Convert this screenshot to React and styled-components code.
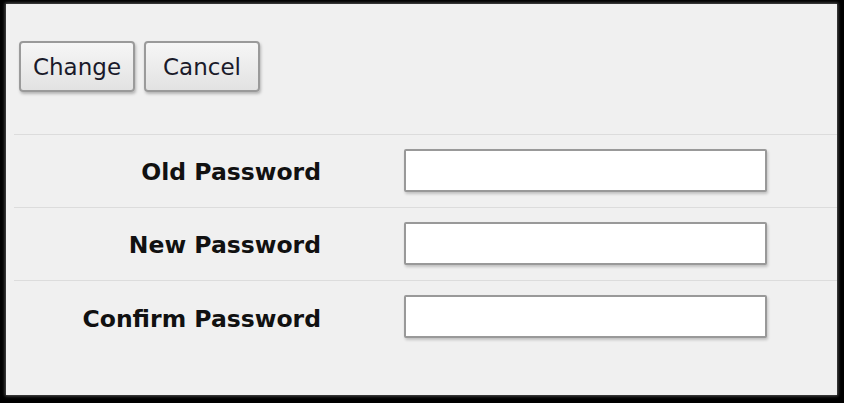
import React from "react";
import styled, { createGlobalStyle } from "styled-components";

const GlobalStyle = createGlobalStyle`
  html, body {
    margin: 0;
    padding: 0;
    background: #000;
  }
  body {
    font-family: "DejaVu Sans", Verdana, sans-serif;
  }
`;

const Frame = styled.div`
  width: 844px;
  height: 403px;
  box-sizing: border-box;
  padding: 4px 7px 8px 6px;
  background: #000;
`;

const Panel = styled.div`
  height: 100%;
  box-sizing: border-box;
  background: #f0f0f0;
  padding-left: 8px;
  box-shadow: 0 0 3px 1px #555;
`;

const Toolbar = styled.div`
  display: flex;
  gap: 9px;
  padding: 37px 0 0 5px;
  height: 131px;
  box-sizing: border-box;
  border-bottom: 1px solid #dcdcdc;
`;

const Button = styled.button`
  height: 51px;
  width: ${(p) => p.width}px;
  font-family: "DejaVu Sans", Verdana, sans-serif;
  font-size: 23px;
  color: #1a1a2a;
  background: linear-gradient(#f6f6f6, #e2e2e2);
  border: 2px solid #9a9a9a;
  border-radius: 4px;
  box-shadow: 1px 2px 3px rgba(0, 0, 0, 0.25);
  padding: 0;
`;

const Row = styled.div`
  display: grid;
  grid-template-columns: 307px 1fr;
  align-items: center;
  height: 73px;
  box-sizing: border-box;
  border-bottom: ${(p) => (p.last ? "none" : "1px solid #dcdcdc")};
`;

const Label = styled.label`
  text-align: right;
  font-weight: bold;
  font-size: 23.5px;
  color: #111;
  padding-top: 2px;
`;

const Input = styled.input`
  margin: 0 0 2px 83px;
  width: 363px;
  height: 43px;
  box-sizing: border-box;
  background: #fff;
  border: 2px solid #999;
  border-radius: 2px;
  box-shadow: 1px 2px 3px rgba(0, 0, 0, 0.2);
  outline: none;
`;

const fields = ["Old Password", "New Password", "Confirm Password"];

const App = () => {
  return (
    <Frame>
      <GlobalStyle />
      <Panel>
        <Toolbar>
          <Button width={116}>Change</Button>
          <Button width={116}>Cancel</Button>
        </Toolbar>
        {fields.map((f, i) => (
          <Row key={f} last={i === fields.length - 1}>
            <Label>{f}</Label>
            <Input type="password" />
          </Row>
        ))}
      </Panel>
    </Frame>
  );
};

export default App;
